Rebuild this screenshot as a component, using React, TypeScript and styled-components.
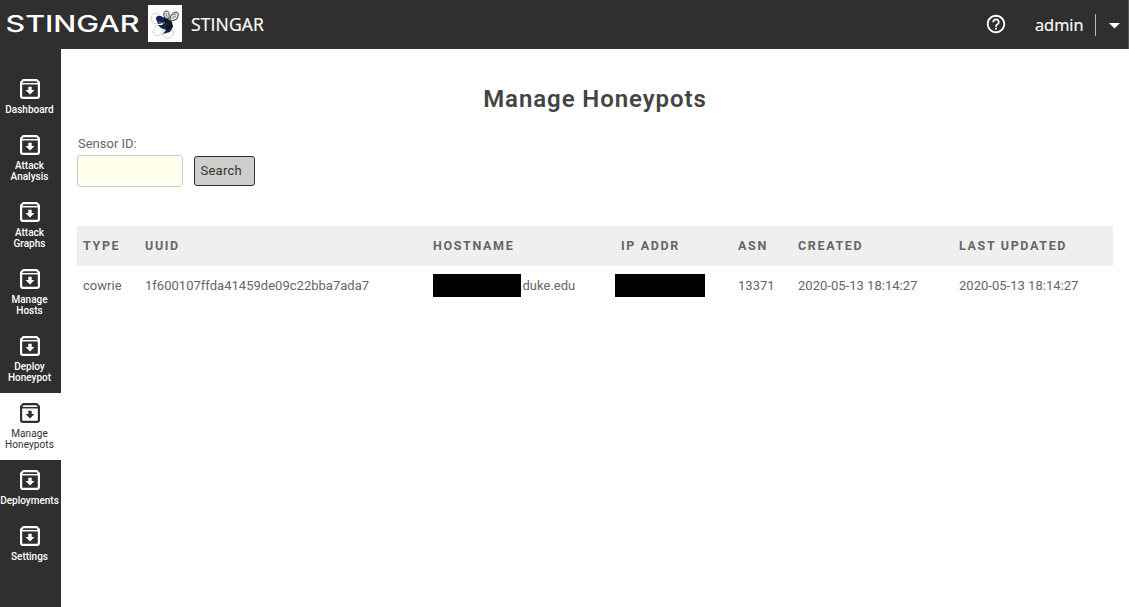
import React from "react";
import styled, { createGlobalStyle } from "styled-components";

const Global = createGlobalStyle`
  * { box-sizing: border-box; }
  body { margin: 0; background: #fff; font-family: Roboto, "Liberation Sans", sans-serif; color: #666; }
`;
const Page = styled.div`
  height: 607px;
  display: flex;
  flex-direction: column;
  overflow: hidden;
`;
const Header = styled.header`
  height: 49px;
  flex: none;
  background: #2f2f2f;
  border-right: 1px solid #555;
  color: #fff;
  display: flex;
  align-items: center;
  font: 18px "Open Sans", sans-serif;
`;
const Wordmark = styled.svg`
  width: 148px;
  height: 49px;
  fill: #fff;
  font: 500 23px Inter, sans-serif;
`;
const Mascot = styled.svg`
  width: 34px;
  height: 37px;
  background: #fff;
  margin-top: -2px;
`;
const Brand = styled.span`
  margin-left: 9px;
  padding-bottom: 2px;
  font-size: 17.6px;
  letter-spacing: 0.1px;
  -webkit-text-stroke: 0.2px #fff;
`;
const Account = styled.div`
  margin-left: auto;
  display: flex;
  align-items: center;
  height: 100%;
`;
const Help = styled.svg`
  width: 22px;
  height: 22px;
  fill: #fff;
  margin: -2px 28px 0 0;
`;
const User = styled.span`
  font-size: 16.4px;
  width: 60px;
  padding-bottom: 1px;
  -webkit-text-stroke: 0.2px #fff;
`;
const Caret = styled.svg`
  width: 33px;
  height: 22px;
  border-left: 1px solid #bbb;
  fill: #fff;
`;
const Body = styled.div`
  display: flex;
  flex: 1;
  min-height: 0;
`;
const Sidebar = styled.nav`
  width: 61px;
  flex: none;
  background: #2f2f2f;
  padding-top: 20px;
`;
const NavItem = styled.a<{ $active?: boolean }>`
  display: flex;
  flex-direction: column;
  align-items: center;
  padding: 10px 2px 10px 0;
  color: ${(p) => (p.$active ? "#2f2f2f" : "#fff")};
  background: ${(p) => (p.$active ? "#fff" : "transparent")};
  font-size: 10px;
  font-weight: ${(p) => (p.$active ? 400 : 500)};
  line-height: 11px;
  letter-spacing: ${(p) => (p.$active ? 0.1 : 0)}px;
  text-align: center;
  white-space: pre;
`;
const ArchiveIcon = styled.svg`
  width: 20px;
  height: 20px;
  margin: 0 0 5px 1px;
  flex: none;
`;
const Main = styled.main`
  flex: 1;
  padding: 36px 16px 0;
`;
const Title = styled.h1`
  margin: 0;
  height: 28px;
  font-size: 24px;
  font-weight: 600;
  letter-spacing: 0.92px;
  line-height: 28px;
  text-align: center;
  color: #444;
`;
const Form = styled.form`
  display: flex;
  align-items: flex-end;
  gap: 11px;
  margin-top: 23px;
`;
const Field = styled.label`
  display: flex;
  flex-direction: column;
  font-size: 13px;
  line-height: 16px;
  text-indent: 1px;
`;
const Input = styled.input`
  width: 106px;
  height: 32px;
  margin-top: 3px;
  border: 1px solid #ccc;
  border-radius: 3px;
  background: #ffffec;
`;
const Search = styled.button`
  width: 61px;
  height: 30px;
  margin-bottom: 1px;
  padding: 0 0 2px 5.500px;
  text-align: left;
  border: 1px solid #2f2f2f;
  border-radius: 3px;
  background: #cfcdcb;
  color: #333;
  font: 13px Roboto, sans-serif;
  letter-spacing: 0.25px;
`;
const Table = styled.div`
  margin-top: 39px;
`;
const Row = styled.div<{ $head?: boolean }>`
  display: grid;
  grid-template-columns: 62px 288px 182px 123px 60px 161px 1fr;
  align-items: center;
  height: 40px;
  padding: 0 0 2px 6px;
  font-size: ${(p) => (p.$head ? 12.5 : 13)}px;
  font-weight: ${(p) => (p.$head ? 700 : 400)};
  letter-spacing: ${(p) => (p.$head ? 1.65 : 0.02)}px;
  background: ${(p) => (p.$head ? "#efefef" : "transparent")};
`;
const Cell = styled.span<{ $indent?: number }>`
  display: flex;
  align-items: center;
  white-space: nowrap;
  padding-left: ${(p) => p.$indent ?? 0}px;
`;
const Redaction = styled.i<{ $width: number }>`
  position: relative;
  width: ${(p) => p.$width}px;
  height: 23px;
  background: #000;
`;
const Domain = styled.span`
  margin-left: -2px;
`;

const links: { label: string; active?: boolean }[] = [
  { label: "Dashboard" },
  { label: "Attack\nAnalysis" },
  { label: "Attack\nGraphs" },
  { label: "Manage\nHosts" },
  { label: "Deploy\nHoneypot" },
  { label: "Manage\nHoneypots", active: true },
  { label: "Deployments" },
  { label: "Settings" },
];

function Archive() {
  return (
    <ArchiveIcon viewBox="0 0 20 20" fill="none" stroke="currentColor">
      <path d="M3.200 1.100H16.800L18.900 3.500V17Q18.900 18.900 17 18.900H3Q1.100 18.900 1.100 17V3.500Z" strokeWidth="2.200" strokeLinejoin="round" />
      <path d="M2 4.700H18" strokeWidth="1.500" />
      <path d="M8.300 7.800h3.400v3.200h2.800L10 15.500 5.500 11h2.800Z" fill="currentColor" stroke="none" />
    </ArchiveIcon>
  );
}

export default function App() {
  return (
    <Page>
      <Global />
      <Header>
        <Wordmark viewBox="0 0 148 49">
          <text x="5.500" y="32" textLength="134" lengthAdjust="spacingAndGlyphs">STINGAR</text>
        </Wordmark>
        <Mascot viewBox="0 0 34 37">
          <g fill="#fff" stroke="#c4c4c4" strokeWidth="0.8">
            <path d="M9 8Q3 8 3 13Q3 18 8 19L14 15Z" />
            <path d="M10 20Q5 22 5 27Q7 32 12 30L16 25Z" />
            <path d="M18 26L14 29Q16 34 21 33Q27 31 25 26L21 24Z" />
          </g>
          <path d="M8 14Q8 10 13 11L16 13L19 15L24 17L25 22L22 27L15 29L18 25L13 23L10 20H14L16 18L10 19Z" fill="#14264f" />
          <path d="M15 12L20 14L24 17L23 20L17 17ZM18 20L25 20L23 24L18 25Z" fill="#15171d" />
          <g fill="#ddd" stroke="#333" strokeWidth="0.9">
            <path d="M17 13Q14 7 18 6Q22 5 21 14Z" />
            <path d="M22 15Q22 8 28 7Q32 7 29 14L24 16Z" />
          </g>
          <path d="M24 10l4-1M24 13l4-2M18 8l1 4M9 17l8 1" stroke="#777" strokeWidth="0.8" />
        </Mascot>
        <Brand>STINGAR</Brand>
        <Account>
          <Help viewBox="0 0 24 24">
            <path d="M11 18h2v-2h-2v2zm1-16C6.480 2 2 6.480 2 12s4.480 10 10 10 10-4.480 10-10S17.520 2 12 2zm0 18c-4.410 0-8-3.590-8-8s3.590-8 8-8 8 3.590 8 8-3.590 8-8 8zm0-14c-2.210 0-4 1.790-4 4h2c0-1.100.9-2 2-2s2 .9 2 2c0 2-3 1.750-3 5h2c0-2.250 3-2.500 3-5 0-2.210-1.790-4-4-4z" />
          </Help>
          <User>admin</User>
          <Caret viewBox="0 0 32 22">
            <path d="M13 9h11l-5.500 5.500Z" />
          </Caret>
        </Account>
      </Header>
      <Body>
        <Sidebar>
          {links.map((l) => (
            <NavItem key={l.label} $active={l.active}>
              <Archive />
              {l.label}
            </NavItem>
          ))}
        </Sidebar>
        <Main>
          <Title>Manage Honeypots</Title>
          <Form>
            <Field>
              Sensor ID:
              <Input />
            </Field>
            <Search type="button">Search</Search>
          </Form>
          <Table>
            <Row $head>
              <Cell>TYPE</Cell>
              <Cell>UUID</Cell>
              <Cell>HOSTNAME</Cell>
              <Cell $indent={6}>IP ADDR</Cell>
              <Cell>ASN</Cell>
              <Cell>CREATED</Cell>
              <Cell>LAST UPDATED</Cell>
            </Row>
            <Row>
              <Cell>cowrie</Cell>
              <Cell>1f600107ffda41459de09c22bba7ada7</Cell>
              <Cell>
                <Redaction $width={88} />
                <Domain>.duke.edu</Domain>
              </Cell>
              <Cell><Redaction $width={90} /></Cell>
              <Cell>13371</Cell>
              <Cell>2020-05-13 18:14:27</Cell>
              <Cell>2020-05-13 18:14:27</Cell>
            </Row>
          </Table>
        </Main>
      </Body>
    </Page>
  );
}
